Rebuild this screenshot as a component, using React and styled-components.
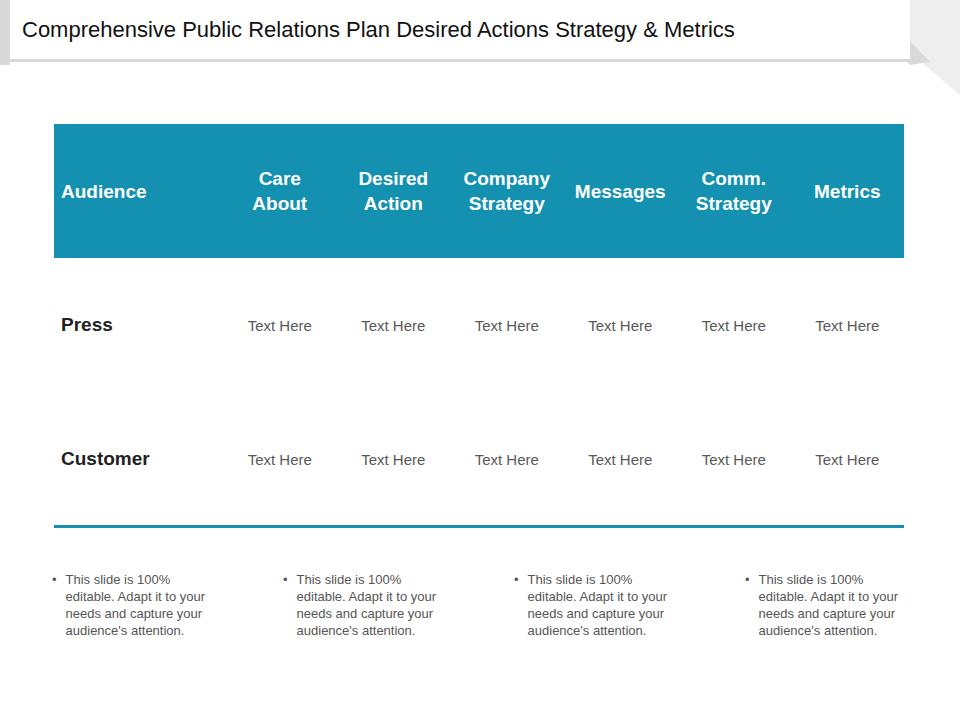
import React from "react";
import styled, { createGlobalStyle } from "styled-components";

const G = createGlobalStyle`
  body { margin:0; background:#fff; font-family:"Liberation Sans", Arial, sans-serif; }
`;
const Page = styled.div`width:960px;height:720px;position:relative;overflow:hidden;`;
const TitleBar = styled.div`
  height:62px; width:900px; margin-left:10px; border-bottom:3px solid #d9d9d9;
  display:flex; align-items:center; padding-left:12px; box-sizing:border-box;
  font-size:22px; color:#111; background:#fff; position:relative; z-index:1;
`;
const LeftStrip = styled.div`position:absolute;left:0;top:0;width:10px;height:65px;background:#d9d9d9;`;
const Corner = styled.svg`position:absolute;right:0;top:0;`;
const Table = styled.div`margin:62px 0 0 54px;width:850px;`;
const Grid = styled.div`display:grid;grid-template-columns:169px repeat(6,1fr);align-items:center;`;
const Head = styled(Grid)`background:#1491b0;height:134px;`;
const HCell = styled.div`
  color:#fff;font-weight:bold;font-size:19px;line-height:25px;
  text-align:${p=>p.$left?"left":"center"};padding-left:${p=>p.$left?"7px":"0"};
`;
const Row = styled(Grid)`height:134px;`;
const Label = styled.div`font-weight:bold;font-size:19px;color:#222;padding-left:7px;`;
const Cell = styled.div`font-size:15px;color:#595959;text-align:center;`;
const Line = styled.div`height:3px;background:#1a8fb0;margin-top:-1px;`;
const Notes = styled.div`display:grid;grid-template-columns:repeat(4,231px);margin:43px 0 0 52px;`;
const Note = styled.div`display:flex;gap:9px;font-size:13px;line-height:17px;color:#555;width:170px;`;

const heads=["Care<br/>About","Desired<br/>Action","Company<br/>Strategy","Messages","Comm.<br/>Strategy","Metrics"];

export default function App(){
  const row=(l)=>(<Row><Label>{l}</Label>{heads.map((_,i)=><Cell key={i}>Text Here</Cell>)}</Row>);
  return <Page><G/>
    <LeftStrip/>
    <Corner width="120" height="100" viewBox="0 0 120 100">
      <polygon points="8,0 120,0 120,95" fill="#eeeeee"/>
      <polygon points="8,0 30,0 90,62 70,65" fill="#d9d9d9"/>
    </Corner>
    <TitleBar>Comprehensive Public Relations Plan Desired Actions Strategy &amp; Metrics</TitleBar>
    <Table>
      <Head><HCell $left>Audience</HCell>{heads.map((h,i)=><HCell key={i} dangerouslySetInnerHTML={{__html:h}}/>)}</Head>
      {row("Press")}
      {row("Customer")}
      <Line/>
    </Table>
    <Notes>{[0,1,2,3].map(i=><Note key={i}><span>•</span><span>This slide is 100% editable. Adapt it to your needs and capture your audience's attention.</span></Note>)}</Notes>
  </Page>;
}
